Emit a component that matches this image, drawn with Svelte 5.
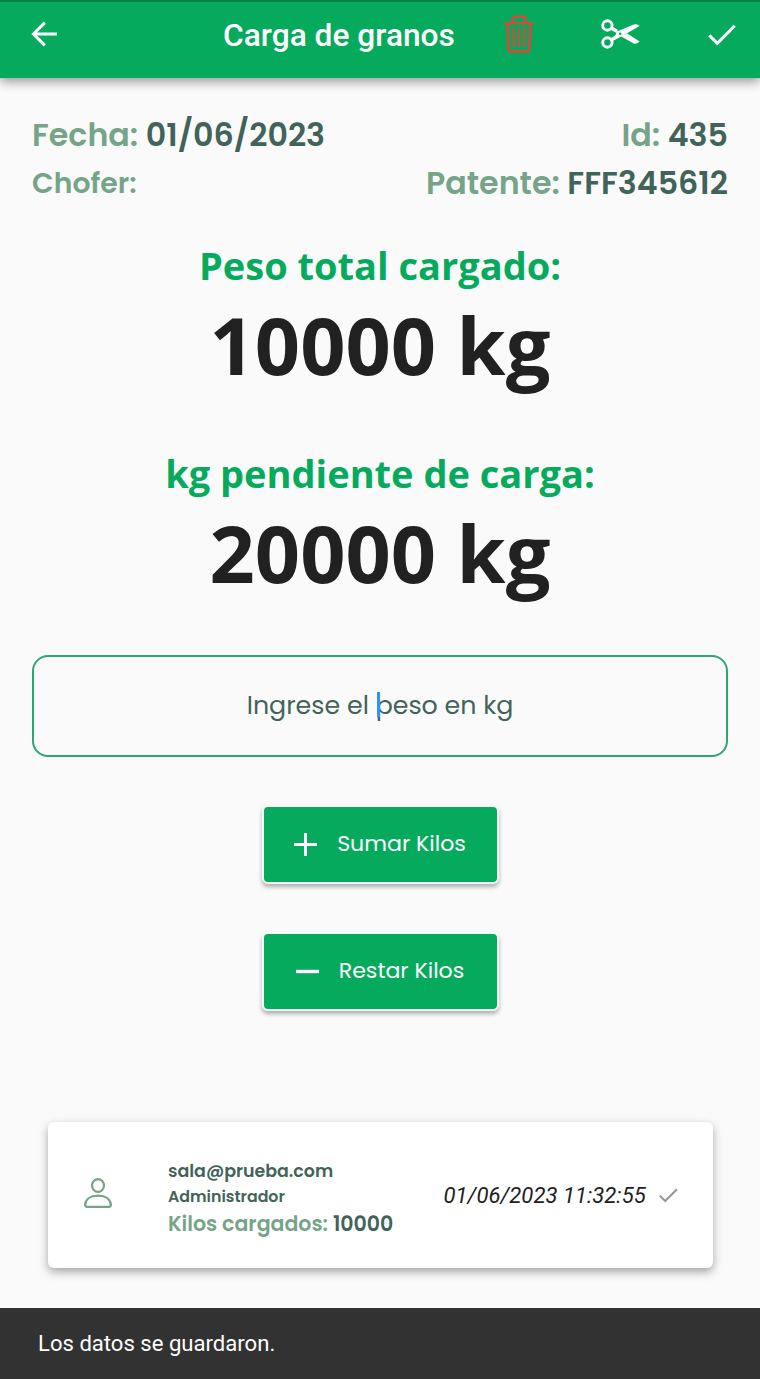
<script lang="ts">
    interface Total {
        label: string;
        kilos: number;
    }

    let fecha: string = "01/06/2023";
    let id: number = 435;
    let patente: string = "FFF345612";

    let totals: Total[] = [
        { label: "Peso total cargado:", kilos: 10000 },
        { label: "kg pendiente de carga:", kilos: 20000 },
    ];

    let entry = {
        email: "sala@prueba.com",
        role: "Administrador",
        kilos: 10000,
        date: "01/06/2023 11:32:55",
    };
</script>

<div class="screen">
    <header class="app-bar">
        <button class="icon-btn" aria-label="Volver">
            <svg width="26" height="26" viewBox="0 0 26 26">
                <path d="M26 13H2.5M13.8 1.6L2.4 13l11.4 11.4" fill="none" stroke="#fff" stroke-width="3" />
            </svg>
        </button>
        <h1>Carga de granos</h1>
        <button class="icon-btn trash" aria-label="Eliminar">
            <svg width="30" height="38" viewBox="0 0 30 38" fill="none" stroke="#c8503c" stroke-linecap="round">
                <path d="M1.3 8.2h27.4" stroke-width="2.6" />
                <path d="M8.6 7.5V4.2Q8.6 1.7 11 1.7h8Q21.4 1.7 21.4 4.2v3.3" stroke-width="2.8" />
                <path d="M3.4 9l1.4 25Q5 36.4 7.5 36.4h15Q25 36.4 25.2 34L26.6 9" stroke-width="2.9" />
                <path d="M9.4 13.5l.5 17.5M15 13.5V31M20.6 13.5L20.1 31" stroke-width="2.4" />
            </svg>
        </button>
        <button class="icon-btn scissors" aria-label="Cortar">
            <svg width="39" height="30" viewBox="0 0 39 30">
                <circle cx="6.4" cy="6.5" r="4.7" fill="none" stroke="#fff" stroke-width="2.9" />
                <circle cx="6.4" cy="23.5" r="4.7" fill="none" stroke="#fff" stroke-width="2.9" />
                <path d="M10.6 9.2L16 12.3M10.6 20.8L17 17" stroke="#fff" stroke-width="3.6" />
                <path d="M14 17.6L15.8 12.6L32.8 5.6Q36.5 4.6 38.6 7L20.5 17.6L12.5 21z" fill="#fff" />
                <path d="M20.2 17.6L26.2 14.4L38.6 22.5Q36.2 25.4 32.8 24.4z" fill="#fff" />
                <circle cx="19.2" cy="14.8" r="1.3" fill="#06aa5d" />
            </svg>
        </button>
        <button class="icon-btn confirm" aria-label="Confirmar">
            <svg width="28" height="22" viewBox="0 0 28 22">
                <path d="M1.3 11.4l8 8L26.7 1.8" fill="none" stroke="#fff" stroke-width="3" />
            </svg>
        </button>
    </header>

    <main>
        <section class="info">
            <div class="info-row">
                <p>Fecha: <b>{fecha}</b></p>
                <p>Id: <b>{id}</b></p>
            </div>
            <div class="info-row">
                <p class="chofer">Chofer:</p>
                <p>Patente: <b>{patente}</b></p>
            </div>
        </section>

        {#each totals as total}
            <section class="total">
                <h2>{total.label}</h2>
                <p>{total.kilos} kg</p>
            </section>
        {/each}

        <div class="weight-field">
            <span>Ingrese el <i class="caret"></i>peso en kg</span>
        </div>

        <div class="actions">
            <button class="action-btn">
                <svg width="23" height="23" viewBox="0 0 23 23">
                    <path d="M0 11.5h23M11.5 0v23" stroke="#fff" stroke-width="3" />
                </svg>
                <span>Sumar Kilos</span>
            </button>
            <button class="action-btn">
                <svg width="23" height="23" viewBox="0 0 23 23">
                    <path d="M0 11.5h23" stroke="#fff" stroke-width="3.4" />
                </svg>
                <span>Restar Kilos</span>
            </button>
        </div>

        <article class="entry">
            <svg class="user" width="28" height="30" viewBox="0 0 28 30" fill="none" stroke="#75a488" stroke-width="2.2">
                <ellipse cx="14" cy="7.5" rx="6" ry="6.4" />
                <path d="M3.2 28.8Q1.1 28.8 1.1 26.8C1.5 21 6.5 17.7 14 17.7S26.5 21 26.9 26.8Q26.9 28.8 24.8 28.8z" />
            </svg>
            <div class="details">
                <p class="email">{entry.email}</p>
                <p class="role">{entry.role}</p>
                <p class="kilos">Kilos cargados: <b>{entry.kilos}</b></p>
            </div>
            <time>{entry.date}</time>
            <svg width="19" height="15" viewBox="0 0 19 15">
                <path d="M.8 7.6l5.4 5.4L18 1.2" fill="none" stroke="#959595" stroke-width="2" />
            </svg>
        </article>
    </main>

    <footer class="snackbar">Los datos se guardaron.</footer>
</div>

<style>
    :global(body) {
        background: #fafafa;
    }

    .screen {
        box-sizing: border-box;
        width: 760px;
        height: 1379px;
        display: flex;
        flex-direction: column;
        overflow: hidden;
        background: #fafafa;
        font-family: Poppins, Inter, sans-serif;
        color: #42635a;
    }

    h1, h2, p {
        margin: 0;
        white-space: nowrap;
    }

    button {
        border: none;
        padding: 0;
        cursor: pointer;
    }

    svg {
        display: block;
        flex: none;
    }

    b {
        font-weight: inherit;
        color: #42635a;
    }

    .app-bar {
        box-sizing: border-box;
        height: 78px;
        flex: none;
        display: flex;
        align-items: center;
        padding: 0 25px 12px 31px;
        border-top: 2px solid #058344;
        background: #06aa5d;
        box-shadow: 0 4px 10px rgba(0, 0, 0, 0.38);
    }

    .icon-btn {
        background: none;
    }

    h1 {
        width: 232px;
        margin-left: 166px;
        padding-top: 4px;
        font: 500 31.7px/40px Roboto, sans-serif;
        color: #ffffff;
    }

    .trash {
        margin-left: 49px;
    }

    .scissors {
        margin-left: 67px;
    }

    .confirm {
        margin-left: 68px;
        padding-top: 1px;
    }

    main {
        flex: 1;
        padding: 33px 32px 0;
    }

    .info-row {
        display: flex;
        justify-content: space-between;
        height: 47.5px;
        line-height: 48px;
        font-size: 31.7px;
        font-weight: 600;
        color: #75a488;
    }

    .chofer {
        font-size: 28.3px;
    }

    .total {
        height: 208px;
        text-align: center;
        font-family: "Open Sans", sans-serif;
        font-weight: 700;
    }

    .info + .total {
        margin-top: 31px;
    }

    h2 {
        font-size: 38px;
        line-height: 56px;
        color: #06aa5d;
    }

    .total p {
        font-size: 79.2px;
        line-height: 103px;
        color: #212121;
    }

    .weight-field {
        box-sizing: border-box;
        height: 102px;
        display: flex;
        align-items: center;
        justify-content: center;
        margin-top: 2px;
        padding-bottom: 2px;
        border: 2px solid #2fa573;
        border-radius: 16px;
        font-size: 25.3px;
    }

    .caret {
        position: relative;
    }

    .caret::before {
        content: "";
        position: absolute;
        left: 1px;
        top: 5px;
        width: 3px;
        height: 25px;
        background: #2f95f0;
    }

    .actions {
        display: flex;
        flex-direction: column;
        align-items: center;
        gap: 48px;
        margin-top: 48px;
    }

    .action-btn {
        box-sizing: border-box;
        width: 237px;
        height: 79px;
        display: flex;
        align-items: center;
        justify-content: center;
        gap: 20px;
        border: 2px solid #f3fffa;
        border-radius: 6px;
        background: #06aa5d;
        box-shadow: 0 3px 4px rgba(0, 0, 0, 0.3);
        font: 400 22.1px/30px Poppins, Inter, sans-serif;
        color: #ffffff;
    }

    .action-btn span {
        padding-bottom: 2px;
    }

    .entry {
        box-sizing: border-box;
        height: 146px;
        display: flex;
        align-items: center;
        margin: 111px 15px 0 16px;
        padding: 0 35px 0 36px;
        border-radius: 6px;
        background: #ffffff;
        box-shadow: 0 4px 10px rgba(0, 0, 0, 0.34);
    }

    .user {
        margin-bottom: 5px;
    }

    .details {
        width: 227px;
        margin-left: 56px;
        padding-top: 6px;
        font-weight: 600;
    }

    .email {
        font-size: 17.4px;
        line-height: 25px;
    }

    .role {
        font-size: 15.8px;
        line-height: 25px;
    }

    .kilos {
        font-size: 20.5px;
        line-height: 29px;
        color: #75a488;
    }

    time {
        width: 204px;
        margin: 0 12px 0 49px;
        font: italic 400 22.1px/30px Roboto, sans-serif;
        white-space: nowrap;
        color: #212121;
    }

    .snackbar {
        box-sizing: border-box;
        height: 71px;
        flex: none;
        padding-left: 38px;
        background: #323232;
        font: 400 22.1px/71px Roboto, sans-serif;
        color: #ffffff;
    }
</style>
